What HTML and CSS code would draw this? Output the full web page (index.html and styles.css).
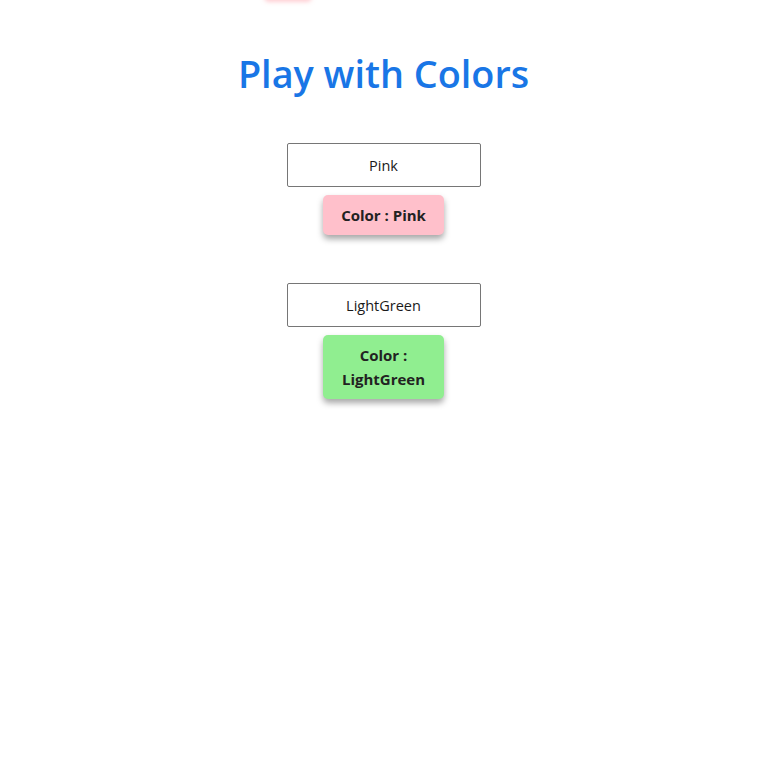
FILE: index.html
```html
<!DOCTYPE html>
<html>
<head>
<meta charset="utf-8">
<link rel="stylesheet" href="styles.css">
</head>
<body>
<div class="ghost"></div>
<main class="app">
  <h1 class="title">Play with Colors</h1>
  <section class="item">
    <input class="color-input" type="text" value="Pink">
    <div class="swatch pink">Color : Pink</div>
  </section>
  <section class="item">
    <input class="color-input" type="text" value="LightGreen">
    <div class="swatch green">Color : LightGreen</div>
  </section>
</main>
</body>
</html>
```
FILE: styles.css
```css
html, body {
  margin: 0;
  padding: 0;
  background: #fff;
}
body {
  font-family: "Open Sans", "Noto Sans", sans-serif;
  color: #222;
  position: relative;
}
.ghost {
  position: absolute;
  top: -40px;
  left: 264px;
  width: 48px;
  height: 40px;
  background: #ffc0cb;
  border-radius: 5px;
  box-shadow: 0 2px 4px rgba(255, 160, 170, 0.5);
}
.app {
  display: flex;
  flex-direction: column;
  align-items: center;
  padding-top: 48px;
}
.title {
  margin: 0 0 44px 0;
  font-size: 37.8px;
  font-weight: 600;
  color: #1976e6;
  line-height: 51px;
}
.item {
  display: flex;
  flex-direction: column;
  align-items: center;
  gap: 8px;
  margin-bottom: 48px;
}
.color-input {
  box-sizing: border-box;
  width: 194px;
  height: 44px;
  border: 1px solid #767676;
  border-radius: 2px;
  text-align: center;
  font-family: "Open Sans", "Noto Sans", sans-serif;
  font-size: 14.5px;
  color: #1a1a1a;
  padding: 0;
  outline: none;
}
.swatch {
  box-sizing: border-box;
  width: 121px;
  padding: 8px 12px;
  border-radius: 5px;
  font-size: 15px;
  font-weight: 700;
  line-height: 24px;
  text-align: center;
  color: #222;
  box-shadow: 0 4px 6px rgba(0, 0, 0, 0.35);
}
.pink { background: #ffc0cb; }
.green { background: #90ee90; }
```
